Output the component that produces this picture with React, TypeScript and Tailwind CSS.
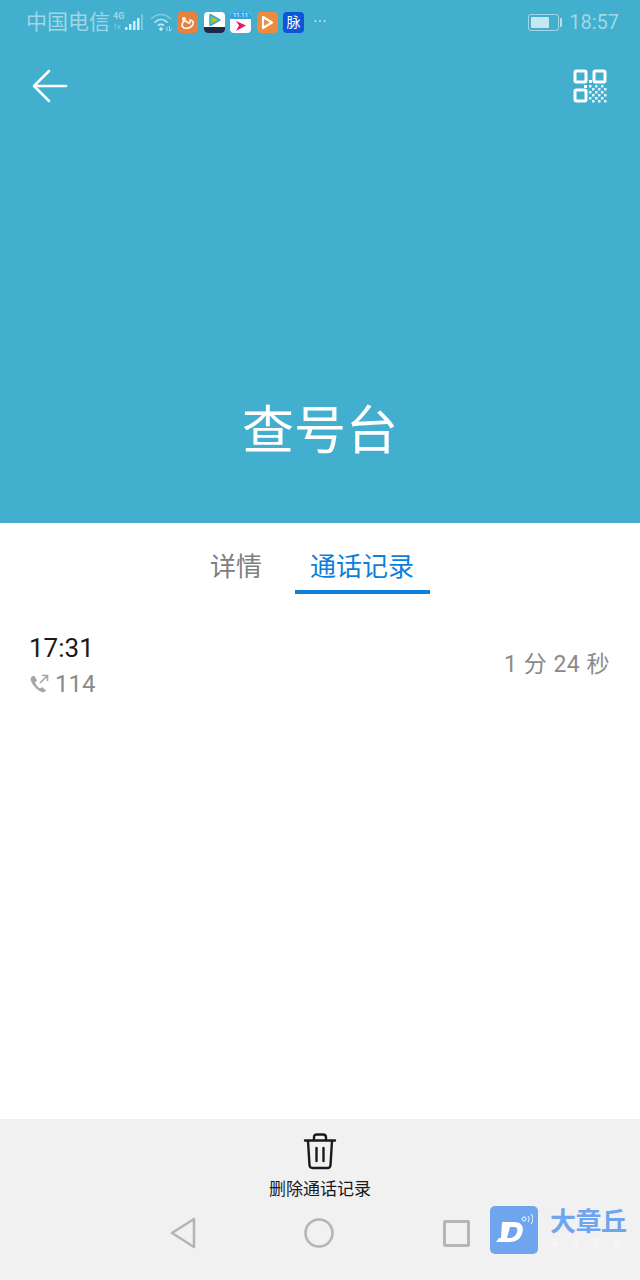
const font = "font-['Roboto','Noto_Sans_CJK_SC',sans-serif]";

function SignalIcon() {
  return (
    <div className="relative w-[32px] h-[22px] ml-[3px]">
      <span className="absolute left-0 top-[0px] text-[9px] leading-[10px] font-bold text-white/50">4G</span>
      <span className="absolute left-0 top-[12px] text-[7px] leading-[8px] font-bold text-white/30">1x</span>
      <svg width="32" height="22" viewBox="0 0 32 22" className="absolute left-0 top-0">
        <rect x="12" y="16" width="2.5" height="3" fill="#fff" fillOpacity="0.75" />
        <rect x="16" y="13" width="2.5" height="6" fill="#fff" fillOpacity="0.75" />
        <rect x="20" y="10" width="2.5" height="9" fill="#fff" fillOpacity="0.75" />
        <rect x="24" y="7" width="2.5" height="12" fill="#fff" fillOpacity="0.75" />
        <rect x="28" y="3" width="2" height="16" fill="#fff" fillOpacity="0.3" />
      </svg>
    </div>
  );
}

function WifiIcon() {
  return (
    <svg width="24" height="22" viewBox="0 0 24 22" fill="none" className="ml-[5px]">
      <path d="M1 8 C7 2 15 2 21 8" stroke="#fff" strokeOpacity="0.35" strokeWidth="1.6" />
      <path d="M4.5 11.5 C8.5 7.5 13.5 7.5 17.5 11.5" stroke="#fff" strokeOpacity="0.7" strokeWidth="1.6" />
      <path d="M8 14.5 C10 13 12 13 14 14.5" stroke="#fff" strokeOpacity="0.7" strokeWidth="1.6" />
      <circle cx="11" cy="18" r="1.8" fill="#fff" fillOpacity="0.75" />
      <path d="M17 16 L17 20 M19.5 15 L19.5 20 L22 18" stroke="#fff" strokeOpacity="0.55" strokeWidth="1" />
    </svg>
  );
}

function AppIcons() {
  return (
    <div className="flex items-center gap-[5.5px] ml-[3px]">
      <div className="w-[21px] h-[21px] rounded-[4px] bg-[#e8813c] flex items-center justify-center">
        <svg width="17" height="17" viewBox="0 0 17 17" fill="none">
          <path d="M3 12 C3 7 6 6 8 8 C10 10 12 9 11 6 C13 6 15 8 14 10 C13 13 9 15 5 14 Z" stroke="#fff" strokeWidth="1.6" />
          <circle cx="5" cy="5" r="2" fill="#fff" />
        </svg>
      </div>
      <div className="w-[21px] h-[21px] rounded-[4px] bg-white overflow-hidden flex flex-col items-center">
        <svg width="21" height="15" viewBox="0 0 21 15">
          <path d="M6 2.5 L16 8 L6 13.5 Z" fill="#8bc34a" stroke="#35a8d8" strokeWidth="1.5" strokeLinejoin="round" />
          <path d="M9 6 L13 8 L9 10 Z" fill="#f4b400" />
        </svg>
        <div className="w-full h-[6px] bg-[#1b2a4a]" />
      </div>
      <div className="w-[21px] h-[21px] rounded-[4px] bg-white overflow-hidden flex flex-col">
        <div className="h-[7px] bg-[#36a3e0] flex items-center justify-center text-[6px] leading-none text-white">11.11</div>
        <svg width="21" height="14" viewBox="0 0 21 14">
          <path d="M6 2 L16 6.5 L6 12 L9 6.5 Z" fill="#e5186f" />
        </svg>
      </div>
      <div className="w-[21px] h-[21px] rounded-[4px] bg-[#ee8a3d] flex items-center justify-center">
        <svg width="15" height="15" viewBox="0 0 15 15" fill="none">
          <path d="M3 2 L12 7.5 L3 13 Z" stroke="#fff" strokeWidth="2.2" strokeLinejoin="round" />
        </svg>
      </div>
      <div className="w-[21px] h-[21px] rounded-[4px] bg-[#0b55d9] flex items-center justify-center text-[14px] leading-none text-white">脉</div>
      <div className="ml-[4px] text-white/70 text-[12px] leading-none tracking-[1px] font-bold">···</div>
    </div>
  );
}

function BatteryIcon() {
  return (
    <div className="flex items-center">
      <div className="w-[31px] h-[17px] rounded-[3px] border border-white/50 p-[2px]">
        <div className="w-[18px] h-full bg-white/70 rounded-[1px]" />
      </div>
      <div className="w-[2px] h-[9px] ml-[1px] bg-white/60 rounded-r-[1px]" />
    </div>
  );
}

function QrIcon() {
  return (
    <svg width="34" height="34" viewBox="0 0 34 34" fill="none">
      <rect x="2" y="2" width="11" height="11" rx="1.5" stroke="#fff" strokeWidth="3" />
      <rect x="21" y="2" width="11" height="11" rx="1.5" stroke="#fff" strokeWidth="3" />
      <rect x="2" y="21" width="11" height="11" rx="1.5" stroke="#fff" strokeWidth="3" />
      <path d="M16 11h3v3h-3z M11 16h3v3h-3z" fill="#fff" />
      {[16, 19, 22, 25, 28, 31].flatMap((y, r) =>
        [16, 19, 22, 25, 28, 31]
          .filter((_, c) => (r + c) % 2 === 0)
          .map((x) => <rect key={`${x}-${y}`} x={x} y={y} width="2.5" height="2.5" fill="#fff" fillOpacity="0.85" />)
      )}
    </svg>
  );
}

function App() {
  return (
    <div className={`${font} relative w-[640px] h-[1280px] flex flex-col bg-white overflow-hidden`}>
      <header className="h-[523px] bg-[#41afcd] flex flex-col shrink-0">
        <div className="h-[44px] pl-[26px] pr-[21px] flex items-center justify-between">
          <div className="flex items-center">
            <span className="text-[21px] leading-none text-white/50">中国电信</span>
            <SignalIcon />
            <WifiIcon />
            <AppIcons />
          </div>
          <div className="flex items-center gap-[7px]">
            <BatteryIcon />
            <span className="text-[20px] leading-none text-white/50">18:57</span>
          </div>
        </div>
        <div className="h-[84px] pl-[32px] pr-[33px] flex items-center justify-between">
          <svg width="36" height="34" viewBox="0 0 36 34" fill="none">
            <path d="M34 17H3M17 2 2 17l15 15" stroke="#fff" strokeWidth="2.6" strokeLinecap="round" strokeLinejoin="round" />
          </svg>
          <QrIcon />
        </div>
        <div className="flex-1 flex items-end justify-center pb-[61px]">
          <h1 className="text-[52px] leading-[60px] font-normal text-white">查号台</h1>
        </div>
      </header>

      <nav className="h-[71px] flex items-start justify-center pl-[4px] shrink-0">
        <div className="h-[71px] w-[83px] mr-[0px] pt-[28px] text-center text-[26px] leading-[32px] text-[#808080] -ml-[20px]">详情</div>
        <div className="h-[71px] w-[135px] ml-[17px] pt-[28px] text-center text-[26px] leading-[32px] text-[#0c7fdc] border-b-[4px] border-[#0c7fdc]">通话记录</div>
      </nav>

      <main className="flex-1">
        <div className="pt-[38px] pl-[29px] pr-[30px] flex items-center justify-between">
          <div>
            <div className="text-[26px] leading-[32px] text-[#1a1a1a]">17:31</div>
            <div className="flex items-center gap-[6px] mt-[6px]">
              <svg width="20" height="20" viewBox="0 0 20 20" fill="none">
                <path d="M3.5 2C2 3 1 4.5 2 7c1.500 4 6 9 10.500 11 2 .8 3.500-.2 4.500-1.500l-4-3.500-2 1.500C9 13.500 7 11 6 8.500l2-2L5.500 2z" fill="#a6a6a6" />
                <path d="M11 9l7-7M13 1.500h5.500V7" stroke="#a6a6a6" strokeWidth="1.600" />
              </svg>
              <span className="text-[24px] leading-[28px] text-[#8a8a8a]">114</span>
            </div>
          </div>
          <div className="text-[23px] leading-[28px] text-[#8a8a8a] tracking-[0.5px]">1 分 24 秒</div>
        </div>
      </main>

      <footer className="h-[161px] bg-[#f1f1f1] flex flex-col items-center shrink-0">
        <svg width="34" height="38" viewBox="0 0 34 38" fill="none" className="mt-[13px]">
          <path d="M2 8.500H32M11 8V5.500C11 3.500 12 2.500 14 2.500H20C22 2.500 23 3.500 23 5.500V8M5 9 6.500 33C6.600 35 7.500 36 9.500 36H24.500C26.500 36 27.400 35 27.500 33L29 9M13.500 16V29M20.500 16V29" stroke="#1a1a1a" strokeWidth="2.400" strokeLinecap="round" strokeLinejoin="round" />
        </svg>
        <div className="mt-[8px] text-[17px] leading-[22px] text-[#1a1a1a]">删除通话记录</div>
        <div className="mt-[17px] w-full pl-[170px] pr-[170px] flex items-center justify-between">
          <svg width="26" height="32" viewBox="0 0 26 32" fill="none">
            <path d="M24 2 2 16l22 14z" stroke="#b5b5b5" strokeWidth="2.600" strokeLinejoin="round" />
          </svg>
          <svg width="30" height="30" viewBox="0 0 30 30" fill="none" className="ml-[-1px]">
            <circle cx="15" cy="15" r="13.500" stroke="#b5b5b5" strokeWidth="2.600" />
          </svg>
          <div className="w-[27px] h-[27px] rounded-[2px] border-[3px] border-[#b5b5b5]" />
        </div>
      </footer>

      <div className="absolute left-[490px] top-[1206px] flex items-start gap-[14px]">
        <div className="w-[48px] h-[48px] rounded-[5px] bg-[#6fa5ee] flex items-center justify-center">
          <svg width="38" height="34" viewBox="0 0 38 34" fill="none">
            <path fillRule="evenodd" d="M7 9h12c7 0 10 4 8.500 10C26 26 21 29 14 29H1l3-4h2zm8 5-3 11h2c4 0 7-2 8-6 1-3.500 0-5-3-5z" fill="#fff" />
            <path d="M29 8a2 2 0 1 1 .1 0M33 3c1.500 1.500 1.500 4 0 6M36 1c2.500 2.500 2.500 7 0 10" stroke="#fff" strokeWidth="1" fill="none" />
          </svg>
        </div>
        <div className="flex flex-col">
          <div className="text-[26px] leading-[30px] font-bold text-[#6fa5ee] mt-[1px] -ml-[2px] tracking-[-0.5px]">大章丘</div>
          <div className="flex justify-between w-[70px] mt-[1px] -ml-[1px] text-[8px] leading-[12px] text-white/70">
            <span>服</span>
            <span>务</span>
            <span>百</span>
            <span>姓</span>
          </div>
        </div>
      </div>
    </div>
  );
}

export default App;
